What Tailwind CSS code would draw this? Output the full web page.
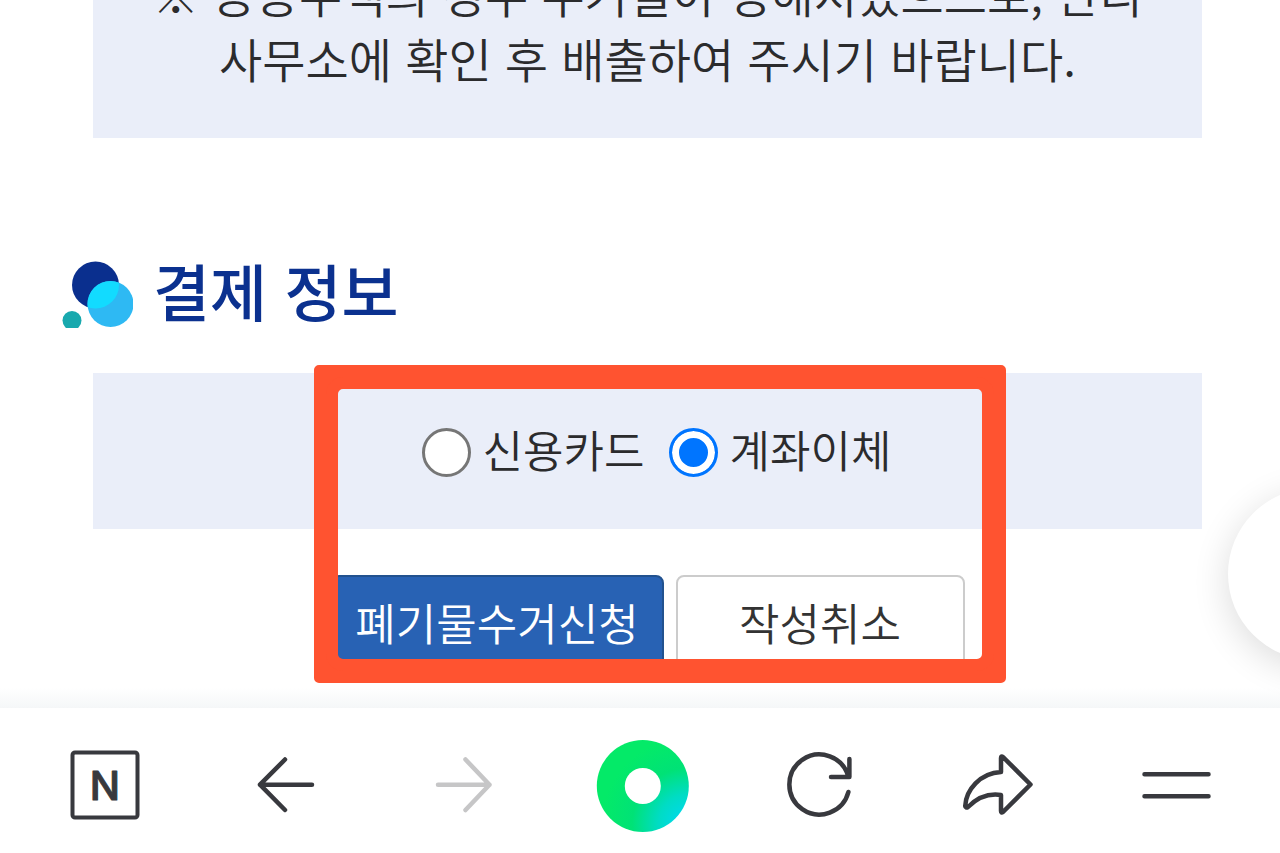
<!DOCTYPE html>
<html lang="ko">
<head>
  <meta charset="UTF-8" />
  <meta name="viewport" content="width=device-width, initial-scale=1" />
  <title>결제 정보</title>
  <script src="https://cdn.jsdelivr.net/npm/@tailwindcss/browser@4"></script>
</head>
<body class="relative h-screen flex flex-col overflow-hidden bg-white text-[#2b2b2d] font-['Noto_Sans_CJK_KR',sans-serif]">

  <main class="flex-1 min-h-0 overflow-hidden pl-[93px] pr-[78px]">
    <!-- Notice -->
    <div class="-mt-10 bg-[#eaeef9] pb-12 text-center text-[47px] leading-[65px] font-[350]">
      <p>※ 공동주택의 경우 수거일이 정해져있으므로, 관리<br>사무소에 확인 후 배출하여 주시기 바랍니다.</p>
    </div>

    <!-- Section title -->
    <div class="-ml-8 mt-[110px] flex h-[92px] items-center gap-5">
      <svg class="w-[72px] h-[67px]" viewBox="0 0 72 67" aria-hidden="true">
        <defs><clipPath id="navy"><circle cx="34.5" cy="24" r="23.5" /></clipPath></defs>
        <circle cx="34.5" cy="24" r="23.5" fill="#0a2f8e" />
        <circle cx="49.5" cy="43" r="23" fill="#2eb9f3" />
        <circle cx="49.5" cy="43" r="23" fill="#12dbff" clip-path="url(#navy)" />
        <circle cx="11" cy="59.5" r="9.5" fill="#18a9ae" />
      </svg>
      <h2 class="pb-2 text-[62px] leading-none font-medium text-[#0b318f]">결제 정보</h2>
    </div>

    <form class="relative mt-[33px]">
      <!-- Payment method -->
      <div class="flex h-[156px] items-center justify-center gap-6 bg-[#eaeef9] pt-0.5 pl-[18px] text-[44px] font-[350]">
        <label class="flex items-center gap-3">
          <input type="radio" name="pay" value="card" class="appearance-none size-[49px] rounded-full border-[3px] border-[#767676] bg-white checked:border-[#0075ff] checked:bg-[#0075ff] checked:shadow-[inset_0_0_0_7px_#fff]">
          <span class="pb-1.5">신용카드</span>
        </label>
        <label class="flex items-center gap-3">
          <input type="radio" name="pay" value="transfer" checked class="appearance-none size-[49px] rounded-full border-[3px] border-[#767676] bg-white checked:border-[#0075ff] checked:bg-[#0075ff] checked:shadow-[inset_0_0_0_7px_#fff]">
          <span class="pb-1.5">계좌이체</span>
        </label>
      </div>

      <div class="mt-[46px] flex justify-center gap-3 text-[44px] font-[350]">
        <button type="submit" class="h-[100px] w-[333px] rounded-lg border-2 border-[#22528f] bg-[#2862b4] pb-1.5 text-white">폐기물수거신청</button>
        <button type="button" class="h-[100px] w-[289px] rounded-lg border-2 border-[#cccccc] bg-white pb-1.5 text-[#333333]">작성취소</button>
      </div>

      <!-- Highlight frame -->
      <div class="pointer-events-none absolute -top-2 left-1/2 ml-3 h-[318px] w-[692px] -translate-x-1/2 rounded-[5px] border-20 border-[#ff5330]">
        <div class="absolute -inset-2 rounded-[17px] border-12 border-[#ff5330]"></div>
      </div>
    </form>
  </main>

  <button type="button" aria-label="맨 위로" class="absolute top-[488px] -right-[120px] size-[172px] rounded-full bg-white shadow-[0_8px_36px_rgba(0,0,0,0.14)]"></button>

  <!-- Browser toolbar -->
  <nav class="relative grid h-[146px] grid-cols-7 justify-items-center border-t border-[#e6e8e9] bg-white px-[15px] pt-8 text-[#38393e] before:absolute before:inset-x-0 before:bottom-full before:h-5 before:bg-linear-to-t before:from-[#f5f7f8] before:to-transparent">
    <button type="button" aria-label="홈" class="size-[92px]">
      <svg class="overflow-visible" viewBox="0 0 92 92" fill="none" stroke="currentColor" stroke-width="4">
        <rect x="14.5" y="12.5" width="65" height="65" rx="2.5" />
        <text x="47" y="60" text-anchor="middle" class="font-[family-name:Inter] text-[40px] font-medium" fill="currentColor" stroke-width="1" stroke-linejoin="round">N</text>
      </svg>
    </button>
    <button type="button" aria-label="뒤로" class="size-[92px]">
      <svg viewBox="0 0 92 92" fill="none" stroke="currentColor" stroke-width="4.5" stroke-linecap="round" stroke-linejoin="round">
        <path d="M48 19.5 23 44.7 48 70M23 44.7H75" />
      </svg>
    </button>
    <button type="button" aria-label="앞으로" class="size-[92px] text-[#c6c6c7]">
      <svg viewBox="0 0 92 92" fill="none" stroke="currentColor" stroke-width="4.5" stroke-linecap="round" stroke-linejoin="round">
        <path d="M50.5 19.5 74.5 44.7 50.5 70M74.5 44.7H23" />
      </svg>
    </button>
    <button type="button" aria-label="그린닷" class="size-[92px]">
      <svg class="overflow-visible" viewBox="0 0 92 92">
        <defs>
          <radialGradient id="dot" cx="1" cy="0.92" r="0.95">
            <stop offset="0.1" stop-color="#00d9ec" />
            <stop offset="0.35" stop-color="#00dcc4" />
            <stop offset="0.65" stop-color="#00e276" />
            <stop offset="1" stop-color="#04ea68" />
          </radialGradient>
        </defs>
        <circle cx="48.8" cy="46" r="46" fill="url(#dot)" />
        <circle cx="48.8" cy="46" r="18" fill="#fff" />
      </svg>
    </button>
    <button type="button" aria-label="새로고침" class="size-[92px]">
      <svg viewBox="0 0 92 92" fill="none" stroke="currentColor" stroke-width="4.5" stroke-linecap="round" stroke-linejoin="round">
        <path d="M75.4 52A30 30 0 1 1 75.4 37M76.4 19V37H58" />
      </svg>
    </button>
    <button type="button" aria-label="공유" class="size-[92px]">
      <svg viewBox="0 0 92 92" fill="none" stroke="currentColor" stroke-width="4.5" stroke-linecap="round" stroke-linejoin="round">
        <path d="M50 32V18Q50 15.500 52 17L79.500 44.500 52 72Q50 73.500 50 71V55C37 53 26 58 17 67Q14.500 68.500 14.200 66C15 50 29 33 50 32Z" />
      </svg>
    </button>
    <button type="button" aria-label="메뉴" class="size-[92px]">
      <svg viewBox="0 0 92 92" fill="none" stroke="currentColor" stroke-width="4.5" stroke-linecap="round">
        <path d="M14.500 34.300H78.500M14.500 56.300H78.500" />
      </svg>
    </button>
  </nav>

</body>
</html>
